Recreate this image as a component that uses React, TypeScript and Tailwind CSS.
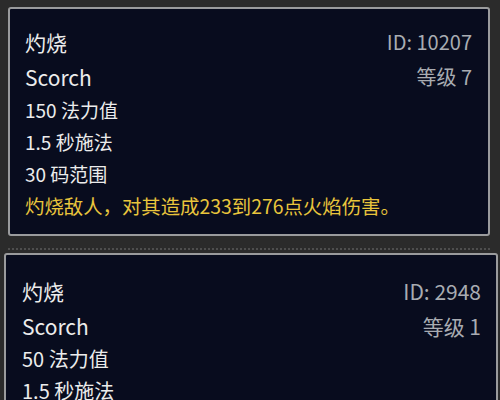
import React from "react";

const font = { fontFamily: '"Noto Sans CJK SC", "Noto Sans", sans-serif' };

function Card({
  className,
  id,
  level,
  lines,
  desc,
  big,
}: {
  className: string;
  id: string;
  level: string;
  lines: string[];
  desc?: string;
  big?: boolean;
}) {
  const side = big ? "text-[21px] text-[#a9acb2]" : "text-[20px] text-[#a9acb2]";
  const body = big ? "text-[20px]" : "text-[19px]";
  return (
    <div className={className}>
      <div className="flex justify-between leading-[32px] mb-[3px]">
        <span className="text-[21px] text-[#ececec]">灼烧</span>
        <span className={side}>{id}</span>
      </div>
      <div className="flex justify-between leading-[32px] mb-[1px]">
        <span className="text-[21px] text-[#ececec]">Scorch</span>
        <span className={side}>{level}</span>
      </div>
      {lines.map((l) => (
        <div key={l} className={`${body} leading-[32px] text-[#ececec]`}>
          {l}
        </div>
      ))}
      {desc && (
        <div className="text-[19.4px] leading-[32px] text-[#e9c53c]">{desc}</div>
      )}
    </div>
  );
}

export default function App() {
  return (
    <div
      className="w-[500px] h-[400px] overflow-hidden bg-[#2b2b2b] pt-[7px]"
      style={font}
    >
      <Card
        className="ml-[8px] w-[482px] h-[229px] border-2 border-[#9a9b9d] rounded-[3px] bg-[#080c1e] pl-[15px] pr-[16px] pt-[17px]"
        id="ID: 10207"
        level="等级 7"
        lines={["150 法力值", "1.5 秒施法", "30 码范围"]}
        desc="灼烧敌人，对其造成233到276点火焰伤害。"
      />
      <div className="ml-[8px] w-[482px] mt-[12px] border-t-2 border-dotted border-[#4e4e4e]" />
      <Card
        className="ml-[4px] mt-[3px] w-[494px] h-[200px] border-2 border-[#9a9b9d] rounded-[3px] bg-[#080c1e] pl-[16px] pr-[15px] pt-[20px]"
        id="ID: 2948"
        level="等级 1"
        lines={["50 法力值", "1.5 秒施法"]}
        big
      />
    </div>
  );
}
